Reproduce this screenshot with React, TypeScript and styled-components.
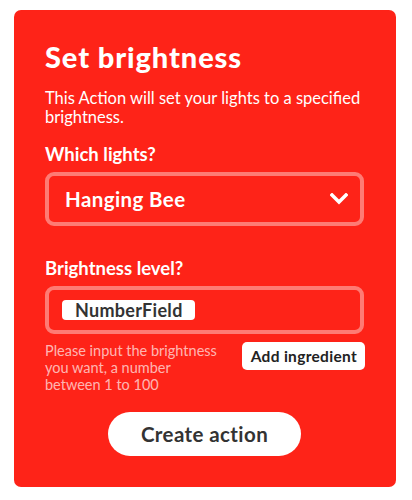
import React from "react";
import styled, { createGlobalStyle } from "styled-components";

const Global = createGlobalStyle`
  html, body { margin: 0; padding: 0; background: #fff; }
  body { font-family: Lato, "Noto Sans", sans-serif; -webkit-font-smoothing: antialiased; }
  * { box-sizing: border-box; }
`;

const Page = styled.div`
  padding: 10px 16px 12px 14px;
`;

const Card = styled.div`
  background: #fe2318;
  border-radius: 7px;
  padding: 29px 32px 31px 31px;
  color: #fff;
  display: flex;
  flex-direction: column;
`;

const Title = styled.h1`
  margin: 0;
  font-size: 29px;
  font-weight: 900;
  line-height: 36px;
  letter-spacing: 0.9px;
`;

const Desc = styled.p`
  margin: 14px 0 0;
  font-size: 16.5px;
  line-height: 19px;
  font-weight: 400;
`;

const Label = styled.div<{ $top: number }>`
  margin-top: ${(p) => p.$top}px;
  font-size: 18.5px;
  font-weight: 700;
  line-height: 24px;
`;

const Field = styled.div<{ $h: number }>`
  margin-top: 6px;
  height: ${(p) => p.$h}px;
  border: 4px solid rgba(255, 255, 255, 0.4);
  border-radius: 9px;
  display: flex;
  align-items: center;
  justify-content: space-between;
`;

const SelectText = styled.span`
  padding-left: 16px;
  font-size: 20.5px;
  font-weight: 700;
  letter-spacing: 0.4px;
`;

const Chevron = styled.svg`
  margin-right: 12px;
`;

const Pill = styled.span`
  margin-left: 13px;
  background: #fff;
  color: #333;
  border-radius: 4px;
  padding: 0 12px 0 13px;
  font-size: 18px;
  font-weight: 700;
  line-height: 20px;
  height: 20px;
  letter-spacing: 0.3px;
`;

const HelpRow = styled.div`
  margin-top: 8px;
  display: flex;
  justify-content: space-between;
  align-items: flex-start;
`;

const Help = styled.div`
  font-size: 14.5px;
  line-height: 17px;
  color: rgba(255, 255, 255, 0.68);
  width: 182px;
`;

const SmallButton = styled.button`
  background: #fff;
  color: #222;
  border: none;
  border-radius: 5px;
  height: 28px;
  padding: 0 8px 0 9px;
  font-family: inherit;
  font-size: 15.5px;
  font-weight: 700;
  letter-spacing: 0.3px;
  margin-right: -1px;
`;

const BigButton = styled.button`
  align-self: center;
  margin-top: 19px;
  background: #fff;
  color: #333;
  border: none;
  border-radius: 22px;
  height: 44px;
  width: 193px;
  font-family: inherit;
  font-size: 20.5px;
  font-weight: 700;
  letter-spacing: 0.4px;
`;

export default function App() {
  return (
    <>
      <Global />
      <Page>
        <Card>
          <Title>Set brightness</Title>
          <Desc>This Action will set your lights to a specified brightness.</Desc>
          <Label $top={15}>Which lights?</Label>
          <Field $h={54}>
            <SelectText>Hanging Bee</SelectText>
            <Chevron width="18" height="12" viewBox="0 0 18 12">
              <path d="M2 2 L9 9 L16 2" stroke="#fff" strokeWidth="3.5" fill="none" strokeLinecap="square" />
            </Chevron>
          </Field>
          <Label $top={30}>Brightness level?</Label>
          <Field $h={48}>
            <Pill>NumberField</Pill>
          </Field>
          <HelpRow>
            <Help>Please input the brightness you want, a number between 1 to 100</Help>
            <SmallButton>Add ingredient</SmallButton>
          </HelpRow>
          <BigButton>Create action</BigButton>
        </Card>
      </Page>
    </>
  );
}
